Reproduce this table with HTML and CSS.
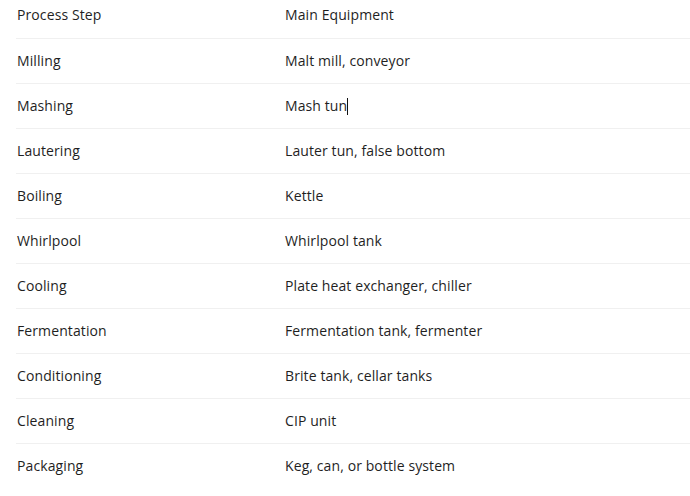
FILE: index.html
```html
<!DOCTYPE html>
<html>
<head>
<meta charset="utf-8">
<link rel="stylesheet" href="styles.css">
</head>
<body>
<table class="steps">
  <tbody>
    <tr><td>Process Step</td><td>Main Equipment</td></tr>
    <tr><td>Milling</td><td>Malt mill, conveyor</td></tr>
    <tr><td>Mashing</td><td>Mash tun<span class="caret"></span></td></tr>
    <tr><td>Lautering</td><td>Lauter tun, false bottom</td></tr>
    <tr><td>Boiling</td><td>Kettle</td></tr>
    <tr><td>Whirlpool</td><td>Whirlpool tank</td></tr>
    <tr><td>Cooling</td><td>Plate heat exchanger, chiller</td></tr>
    <tr><td>Fermentation</td><td>Fermentation tank, fermenter</td></tr>
    <tr><td>Conditioning</td><td>Brite tank, cellar tanks</td></tr>
    <tr><td>Cleaning</td><td>CIP unit</td></tr>
    <tr><td>Packaging</td><td>Keg, can, or bottle system</td></tr>
  </tbody>
</table>
</body>
</html>
```
FILE: styles.css
```css
html, body {
  margin: 0;
  padding: 0;
  background: #ffffff;
}
body {
  font-family: "Open Sans", "Noto Sans", sans-serif;
  font-size: 14px;
  letter-spacing: 0.1px;
  color: #1f1f1f;
  overflow: hidden;
}
.steps {
  border-collapse: collapse;
  margin: -7px 0 0 16px;
  width: 674px;
}
.steps tr {
  height: 45px;
}
.steps td {
  padding: 0 0 1px 1px;
  vertical-align: middle;
  border-bottom: 1px solid #f0f0f0;
}
.steps tr:last-child td {
  border-bottom: none;
}
.steps td:first-child {
  width: 267px;
}
.caret {
  display: inline-block;
  width: 1px;
  height: 17px;
  background: #111;
  vertical-align: -4px;
}
```
